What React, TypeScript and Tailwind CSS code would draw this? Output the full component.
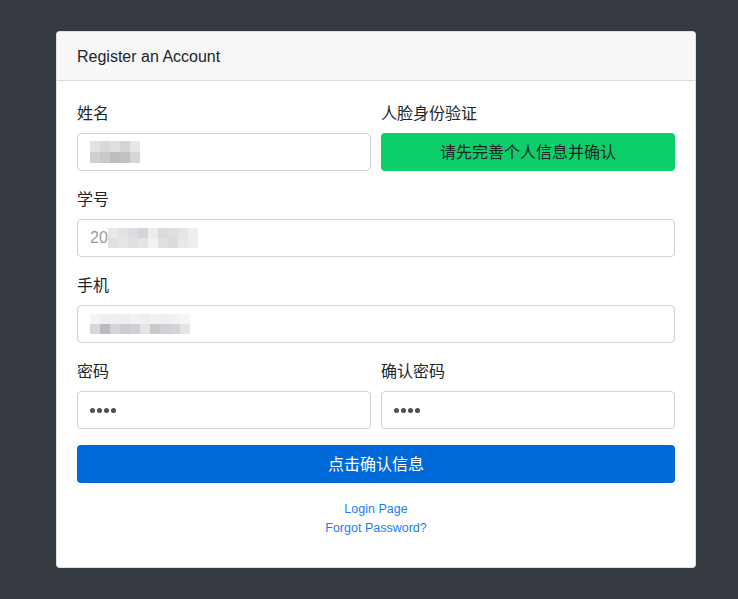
import React from "react";

const FONT = {
  fontFamily:
    '"Segoe UI", "Liberation Sans", "Noto Sans CJK SC", sans-serif',
};

function Pix({ cells, w = 10, h = 10 }: { cells: string[][]; w?: number; h?: number }) {
  return (
    <div className="flex flex-col">
      {cells.map((row, i) => (
        <div key={i} className="flex">
          {row.map((c, j) => (
            <div key={j} style={{ width: w, height: h, background: c }} />
          ))}
        </div>
      ))}
    </div>
  );
}

function Label({ children }: { children: React.ReactNode }) {
  return (
    <label className="block text-[16px] leading-[24px] text-[#212529] pt-[1px] mb-[7px]">{children}</label>
  );
}

function Box({ children }: { children?: React.ReactNode }) {
  return (
    <div className="h-[38px] w-full rounded-[4px] border border-[#ced4da] bg-white px-3 flex items-center">
      {children}
    </div>
  );
}

function Dots() {
  return (
    <div className="flex gap-[2px] items-center">
      {[0, 1, 2, 3].map((i) => (
        <div key={i} className="w-[5px] h-[5px] rounded-full bg-[#495057]" />
      ))}
    </div>
  );
}

export default function App() {
  return (
    <div className="min-h-[599px] w-full bg-[#343a40] pt-[31px] pb-[31px]" style={FONT}>
      <div className="ml-[56px] w-[640px] rounded-[4px] border border-[rgba(0,0,0,0.125)] bg-white overflow-hidden">
        <div className="h-[49px] bg-[#f7f7f7] border-b border-[#dcdcdc] px-5 pt-[2px] flex items-center text-[16px] text-[#212529]">
          Register an Account
        </div>
        <div className="px-5 pt-5 pb-[29px]">
          <div className="grid grid-cols-2 gap-[10px]">
            <div>
              <Label>姓名</Label>
              <Box>
                <Pix
                  cells={[
                    ["#e2e2e4", "#d8d8da", "#e0e0e2", "#d4d4d6", "#e6e6e8"],
                    ["#cfcfd2", "#c8c8cb", "#bdbdc0", "#c2c2c5", "#d6d6d8"],
                  ]}
                  h={11}
                />
              </Box>
            </div>
            <div>
              <Label>人脸身份验证</Label>
              <button className="h-[38px] w-full rounded-[4px] bg-[#0dcf6a] text-[16px] text-[#212529] pt-[1px]">
                请先完善个人信息并确认
              </button>
            </div>
          </div>
          <div className="mt-4">
            <Label>学号</Label>
            <Box>
              <span className="text-[16px] text-[#9a9ca0] mr-0">20</span>
              <Pix
                cells={[
                  ["#e8e8ea", "#e2e2e4", "#dcdde0", "#d2d6da", "#ececee", "#dadadc", "#dfdfe1", "#e4e4e6", "#eceef2"],
                  ["#e0e0e2", "#e6e6e8", "#e0e0e2", "#e4e4e6", "#f2f2f2", "#e0e0e2", "#dcdcde", "#e8e8ea", "#eceef2"],
                ]}
              />
            </Box>
          </div>
          <div className="mt-4">
            <Label>手机</Label>
            <Box>
              <Pix
                cells={[
                  ["#f4f4f4", "#eeeef0", "#f0f0f2", "#eeeeee", "#f2f2f4", "#eeeef0", "#f2f2f2", "#f0f0f2", "#f2f2f4", "#f6f6f6"],
                  ["#d8d6d6", "#b8bcc2", "#d2d4d8", "#ccccd0", "#d0d0d4", "#e2e4e8", "#cbc8c8", "#cfd1d5", "#d4d4d6", "#e4e4e6"],
                ]}
              />
            </Box>
          </div>
          <div className="mt-4 grid grid-cols-2 gap-[10px]">
            <div>
              <Label>密码</Label>
              <Box>
                <Dots />
              </Box>
            </div>
            <div>
              <Label>确认密码</Label>
              <Box>
                <Dots />
              </Box>
            </div>
          </div>
          <button className="mt-4 h-[38px] w-full rounded-[4px] bg-[#0069d9] text-white text-[16px] pt-[1px]">
            点击确认信息
          </button>
          <div className="mt-[17px] text-center text-[12.5px] leading-[19px]">
            <a className="block text-[#1a7dff]">Login Page</a>
            <a className="block text-[#1a7dff]">Forgot Password?</a>
          </div>
        </div>
      </div>
    </div>
  );
}
